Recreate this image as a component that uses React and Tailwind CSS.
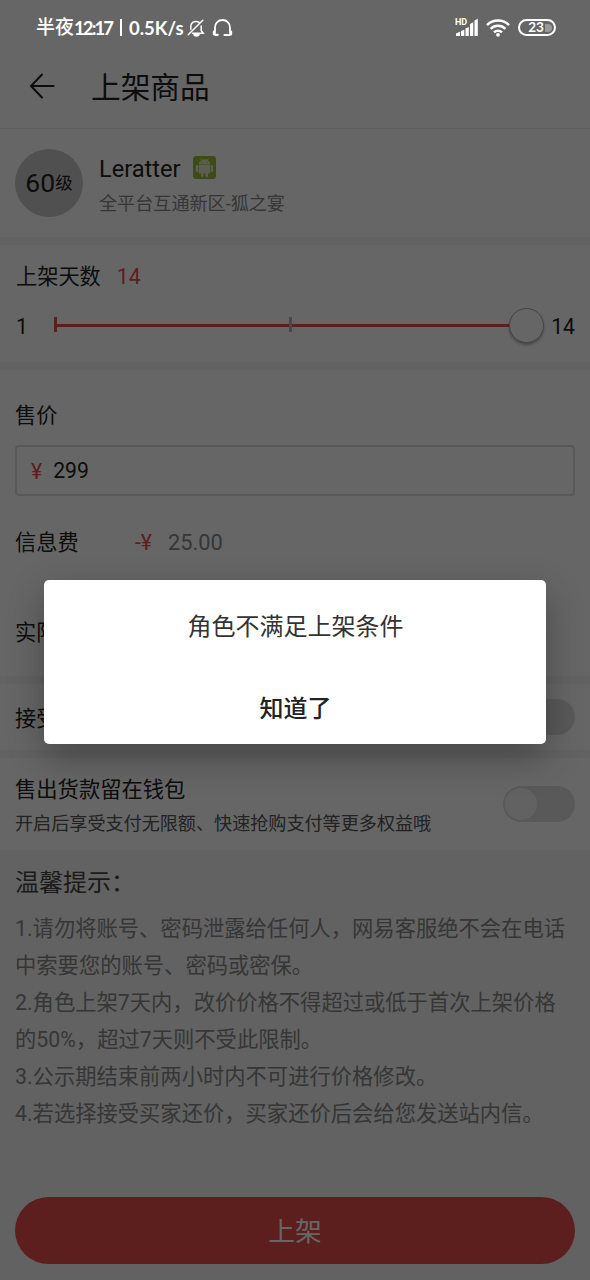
import { useState } from "react";

const tips = [
  "1.请勿将账号、密码泄露给任何人，网易客服绝不会在电话中索要您的账号、密码或密保。",
  "2.角色上架7天内，改价价格不得超过或低于首次上架价格的50%，超过7天则不受此限制。",
  "3.公示期结束前两小时内不可进行价格修改。",
  "4.若选择接受买家还价，买家还价后会给您发送站内信。",
];

function StatusBar() {
  return (
    <div className="relative z-20 flex h-[55px] items-center justify-between pl-[36px] pr-[34px] text-white">
      <div className="flex items-center">
        <span className="w-[38px] text-[19px] leading-[24px] font-medium">半夜</span>
        <span className="w-[41px] font-['Lato'] text-[18.5px] leading-[24px] font-bold tracking-[-1.9px]">12:17</span>
        <span className="ml-[5px] h-[17px] w-[2px] bg-white" />
        <span className="ml-[7px] w-[58px] font-['Lato'] text-[18.5px] leading-[24px] font-bold">0.5K/s</span>
        <svg width="18" height="18" viewBox="0 0 18 18" fill="none" stroke="currentColor" strokeWidth="1.5" strokeLinecap="round">
          <path d="M3.800 10.500V7.800C3.800 4 6.500 2.400 9 2.400c1.200 0 2.200.300 3 .900M14.200 7v4.500l2 2.700H5.500M1.200 15.800 15.800 1.200" />
          <path d="M7 15h5a2.500 2 0 0 1-5 0Z" fill="currentColor" />
        </svg>
        <svg className="ml-[7px]" width="21" height="18" viewBox="0 0 21 18" fill="none" stroke="currentColor" strokeWidth="1.8" strokeLinecap="round">
          <path d="M3 12V8.500a7.500 7.500 0 0 1 15 0V12" />
          <path d="M2.300 12.800v2.200M18.700 12.800v2.200" strokeWidth="3" />
          <path d="M3.500 15.800h2.200M12.500 16h5" strokeWidth="2.200" />
        </svg>
      </div>
      <div className="flex items-center">
        <svg width="24" height="19" viewBox="0 0 24 19" fill="currentColor">
          <text x="0" y="6.8" fontSize="9" fontWeight="700" className="font-['Roboto']">HD</text>
          <path d="M1 18v-2.500l4-1.800V18ZM6 18v-5l3.300-1.300V18ZM10.500 18v-7.500l3.300-1.500v9ZM15 18V6l3.300-1.800V18ZM19.500 18V2.500l3.300-1.800V18Z" />
        </svg>
        <svg className="ml-[7px]" width="24" height="18" viewBox="0 0 24 18" fill="none" stroke="currentColor" strokeWidth="2.5">
          <path d="M1 6.200a15.500 15.500 0 0 1 22 0M4.600 9.900a10.500 10.500 0 0 1 14.800 0M8 13.300a5.700 5.700 0 0 1 8 0" />
          <circle cx="12" cy="15.8" r="1.9" fill="currentColor" stroke="none" />
        </svg>
        <span className="relative ml-[8px] flex h-[17px] w-[38px] items-center justify-center rounded-full border-2 border-white font-['Lato'] text-[13.5px] leading-none font-bold">
          <span className="absolute top-[2.5px] right-[2px] h-[8px] w-[7px] rounded-r-full bg-[#999]" />
          <span className="relative -ml-[2px]">23</span>
        </span>
      </div>
    </div>
  );
}

function AndroidBadge() {
  return (
    <svg className="ml-[12px] -translate-y-[2px]" width="23" height="23" viewBox="0 0 23 23" fill="#e4e9d8">
      <rect width="23" height="23" rx="3" fill="#9abd2e" />
      <path d="M5.800 8.200a5.700 5 0 0 1 11.400 0Z" />
      <path d="m7.500 2.200 1.500 2.300M15.500 2.200 14 4.500" stroke="#e4e9d8" strokeWidth="0.9" />
      <path d="M5.800 8.800h11.400v7.700a1 1 0 0 1-1 1H6.800a1 1 0 0 1-1-1Z" />
      <rect x="2.9" y="9" width="2.3" height="7" rx="1.1" />
      <rect x="17.800" y="9" width="2.3" height="7" rx="1.1" />
      <rect x="7.9" y="15" width="2.6" height="6" rx="1.2" />
      <rect x="12.5" y="15" width="2.6" height="6" rx="1.2" />
      <circle cx="9" cy="6.2" r="0.6" fill="#9abd2e" />
      <circle cx="14" cy="6.2" r="0.6" fill="#9abd2e" />
    </svg>
  );
}

function Toggle() {
  return (
    <span className="block h-[36px] w-[72px] rounded-full bg-[#dfdfdf] p-[2px]">
      <span className="block size-[32px] rounded-full bg-[#f6f6f6]" />
    </span>
  );
}

function Divider() {
  return <div className="h-[8px] bg-[#f4f4f4]" />;
}

export default function App() {
  const [open, setOpen] = useState(true);

  return (
    <div className="relative h-[1280px] w-[590px] overflow-hidden bg-white font-['Roboto','Noto_Sans_CJK_SC',sans-serif] text-[21.2px] leading-[30px] text-[#222]">
      <StatusBar />

      <header className="flex h-[74px] items-center border-b border-[#eaeaea] pb-[10px] pl-[29px]">
        <svg width="27" height="27" viewBox="0 0 27 27" fill="none" stroke="currentColor" strokeWidth="2" strokeLinecap="round">
          <path d="M13 1.500 2 13l11 11.500M2 13h22.500" />
        </svg>
        <h1 className="ml-[35px] pt-[2px] text-[29.7px] leading-[40px]">上架商品</h1>
      </header>

      <section className="flex h-[108px] px-[15px] pt-[20px]">
        <div className="flex size-[68px] items-center justify-center rounded-full bg-[#c9c9c9]">
          <span className="text-[26.5px]">60</span>
          <span className="text-[17.5px]">级</span>
        </div>
        <div className="ml-[16px] pt-[5px]">
          <div className="flex items-center">
            <span className="text-[23.6px]">Leratter</span>
            <AndroidBadge />
          </div>
          <p className="mt-[6px] text-[18.1px] leading-[28px] text-[#888]">全平台互通新区-狐之宴</p>
        </div>
      </section>
      <Divider />

      <section className="h-[117px] px-[15px] pt-[17px]">
        <div className="flex gap-[16px] pl-px">
          <span>上架天数</span>
          <span className="text-[#e84d4d]">14</span>
        </div>
        <div className="mt-[15px] flex h-[36px] items-center">
          <span className="w-[39px] pt-[4px] pl-px">1</span>
          <div className="relative flex h-[36px] w-[474px] items-center">
            <div className="h-[3px] w-full bg-[#e84d4d]" />
            <span className="absolute top-[10px] left-0 h-[15px] w-[3px] bg-[#e84d4d]" />
            <span className="absolute top-[10px] left-[235px] h-[15px] w-[3px] bg-[#b5b5b5]" />
            <span className="absolute top-px right-[-17px] size-[35px] rounded-full border border-[#aaa] bg-white shadow-[0_2px_3px_rgba(0,0,0,0.3)]" />
          </div>
          <span className="ml-[24px] pt-[4px]">14</span>
        </div>
      </section>
      <Divider />

      <section className="h-[306px] px-[15px] pt-[31px]">
        <div>售价</div>
        <div className="mt-[14px] flex h-[51px] items-center rounded-[4px] border-2 border-[#dcdce0] pl-[14px]">
          <span className="pt-[2px] text-[#e84d4d]">¥</span>
          <span className="ml-[11px] pt-px">299</span>
        </div>
        <div className="mt-[32px] flex">
          <span className="w-[120px]">信息费</span>
          <span className="text-[#e84d4d]">-¥</span>
          <span className="ml-[16px] text-[21.8px] text-[#888]">25.00</span>
        </div>
        <div className="mt-[60px]">实际收入</div>
      </section>
      <Divider />

      <section className="flex h-[66px] items-center justify-between px-[15px]">
        <span className="pt-[3px]">接受还价</span>
        <Toggle />
      </section>
      <Divider />

      <section className="flex h-[92px] items-center justify-between px-[15px]">
        <div className="pt-[4px]">
          <div className="text-[21.3px]">售出货款留在钱包</div>
          <p className="mt-[5px] text-[18.1px] leading-[28px] text-[#555]">开启后享受支付无限额、快速抢购支付等更多权益哦</p>
        </div>
        <Toggle />
      </section>

      <section className="h-[430px] bg-[#f4f4f4] px-[15px] pt-[16px]">
        <h2 className="text-[24px] leading-[34px] text-[#444]">温馨提示：</h2>
        <div className="mt-[10px] h-[287px] text-[21.3px] leading-[37.1px] text-[#888]">
          {tips.map((tip) => (
            <p key={tip}>{tip}</p>
          ))}
        </div>
        <button className="block h-[67px] w-full rounded-full bg-[#e84d4d] pt-[2px] text-[26.7px] text-white">上架</button>
      </section>

      {open && (
        <div className="absolute inset-0 z-10 flex items-center justify-center bg-black/60 pt-[44px]">
          <div className="flex h-[164px] w-[502px] flex-col items-center rounded-[5px] bg-white pt-[30px] pl-px text-[24px] leading-[34px] text-[#333] shadow-[0_14px_36px_rgba(0,0,0,0.3)]">
            <p>角色不满足上架条件</p>
            <button onClick={() => setOpen(false)} className="mt-[48px] font-medium text-[#222]">
              知道了
            </button>
          </div>
        </div>
      )}
    </div>
  );
}
